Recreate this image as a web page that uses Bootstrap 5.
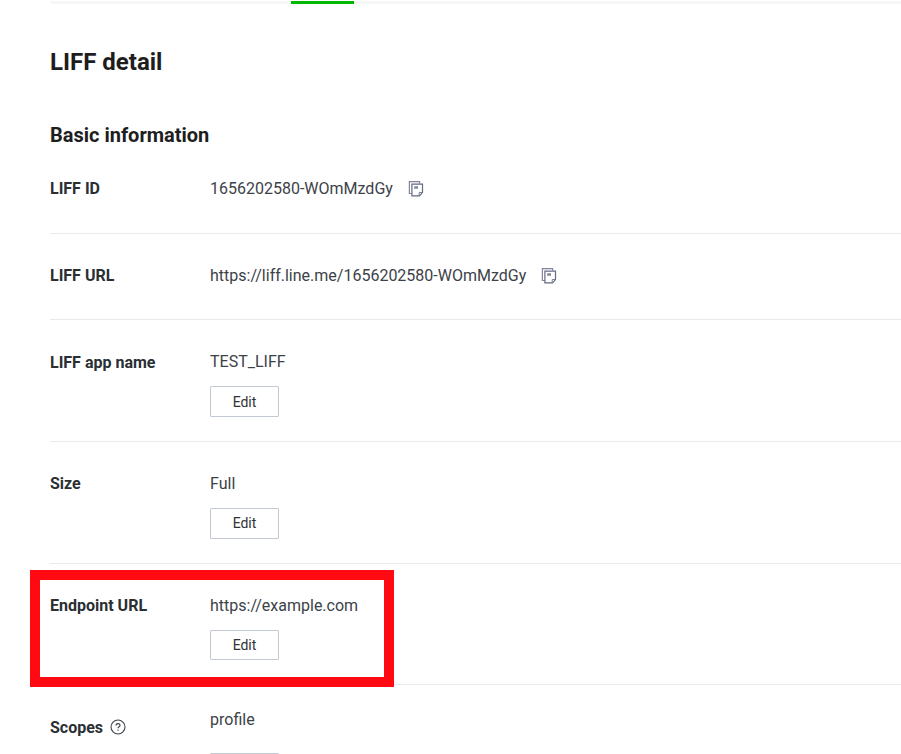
<!DOCTYPE html>
<html lang="en">
<head>
<meta charset="utf-8">
<meta name="viewport" content="width=device-width, initial-scale=1">
<title>LIFF detail</title>
<link href="https://cdn.jsdelivr.net/npm/bootstrap@5.3.0/dist/css/bootstrap.min.css" rel="stylesheet">
<style>
body{font-family:Roboto,"Liberation Sans",sans-serif;font-size:16px;line-height:24px;color:#3c4248;height:754px}
.page{padding-left:50px}
.tabline{height:3px;margin-top:1px;background:#f7f7f7;padding-left:241px}
.tab-active{width:62.6px;height:3px;background:#00b900}
.title{font-size:24px;line-height:32px;font-weight:700;color:#1e1e1e;padding-top:42px;margin:0}
.subtitle{font-size:20px;line-height:28px;font-weight:700;color:#1e1e1e;padding-top:43px;margin:0}
.item{border-bottom:1px solid #e9eaeb;padding-top:30px}
.item-first{height:85px;padding-top:28px}
.item-short{height:86px}
.item-tall{height:122px}
.item-end{height:121px}
.item-last{height:69px;border:0;padding-top:23px}
.item-last .term{padding-top:8px}
.term{width:160px;font-weight:700;color:#2a2f33}
.term-low{padding-top:1px}
.btn-edit{--bs-btn-padding-y:0;--bs-btn-padding-x:0;--bs-btn-font-size:14px;--bs-btn-border-color:#c3c9d3;--bs-btn-border-radius:1px;--bs-btn-color:#303338;--bs-btn-bg:#fff;width:69px;height:31px;line-height:29px;margin-top:12px}
.btn-low{line-height:31px}
.item-end .btn-edit{height:30px}
.item-last .btn-edit{margin-top:21px}
.copy{margin-left:15px}
.help{margin:0 0 2px 7px}
.highlight{left:30px;top:570px;width:364px;height:117px;border:10px solid #ff0a12}
</style>
<script src="https://cdn.jsdelivr.net/npm/bootstrap@5.3.0/dist/js/bootstrap.bundle.min.js"></script>
</head>
<body class="bg-white position-relative overflow-hidden">
<svg class="d-none">
  <symbol id="copy" viewBox="0 0 16 18">
    <path d="M4 13.5H1.4V1.6H11.6V3.5" fill="none" stroke="#80849c" stroke-width="1.2"/>
    <path d="M3.9 4.1H14.5V12.6L11.5 15.9H3.9Z" fill="#fff" stroke="#636984" stroke-width="1.2"/>
    <path d="M11.2 15.9V12.5H14.5" fill="none" stroke="#7a7f98"/>
    <path d="M6 6H10V9H6Z" fill="#a6a9bc"/>
    <path d="M7 7H10V8H7Z" fill="#7c8099"/>
  </symbol>
</svg>
<main class="page">
  <div class="tabline"><div class="tab-active"></div></div>
  <h1 class="title">LIFF detail</h1>
  <h2 class="subtitle">Basic information</h2>
  <section>
    <div class="item item-first d-flex"><div class="term">LIFF ID</div><div class="d-flex align-items-center align-self-start"><span>1656202580-WOmMzdGy</span><svg class="copy" width="16" height="18"><use href="#copy"/></svg></div></div>
    <div class="item item-short d-flex"><div class="term">LIFF URL</div><div class="d-flex align-items-center align-self-start"><span>https://liff.line.me/1656202580-WOmMzdGy</span><svg class="copy" width="16" height="18"><use href="#copy"/></svg></div></div>
    <div class="item item-tall d-flex"><div class="term term-low">LIFF app name</div><div class="d-flex flex-column"><span>TEST_LIFF</span><button class="btn btn-edit btn-low">Edit</button></div></div>
    <div class="item item-tall d-flex"><div class="term">Size</div><div class="d-flex flex-column"><span>Full</span><button class="btn btn-edit">Edit</button></div></div>
    <div class="item item-end d-flex"><div class="term">Endpoint URL</div><div class="d-flex flex-column"><span>https://example.com</span><button class="btn btn-edit">Edit</button></div></div>
    <div class="item item-last d-flex"><div class="term d-flex align-items-center align-self-start">Scopes
      <svg class="help" width="16" height="16" viewBox="0 0 16 16" fill="none" stroke="#3c4248"><circle cx="8" cy="8" r="7" stroke-width="1.1"/><path d="M6 6.6C6 4 10 4 10 6.4C10 7.8 8 7.8 8 9.3M8 10.6V11.8" stroke-width="1.1"/></svg></div>
      <div class="d-flex flex-column"><span>profile</span><button class="btn btn-edit" aria-label="Edit"></button></div></div>
  </section>
</main>
<div class="highlight position-absolute"></div>
</body>
</html>
